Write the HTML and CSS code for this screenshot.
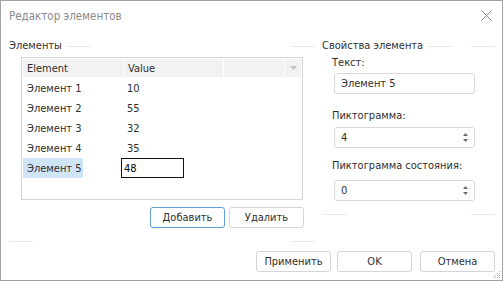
FILE: index.html
```html
<!DOCTYPE html>
<html lang="ru">
<head>
<meta charset="utf-8">
<title>Редактор элементов</title>
<link rel="stylesheet" href="styles.css">
</head>
<body>
<div class="window">
  <div class="titlebar">
    <span class="title">Редактор элементов</span>
    <svg class="close" width="11" height="11" viewBox="0 0 11 11"><path d="M0.5 0.5L10.5 10.5M10.5 0.5L0.5 10.5" stroke="#8a8a8a" stroke-width="1" fill="none"/></svg>
  </div>
  <div class="body">
    <div class="col-left">
      <div class="group-head">
        <span class="group-title">Элементы</span>
        <span class="gline l1"></span>
        <span class="flex"></span>
        <span class="gline l2"></span>
      </div>
      <div class="grid">
        <div class="grid-head">
          <div class="hc c1">Element</div>
          <div class="hc c2">Value</div>
          <div class="hc c3"></div>
          <div class="hc c4"><svg width="7" height="4" viewBox="0 0 7 4"><path d="M0 0H7L3.5 4Z" fill="#c4c4c4"/></svg></div>
        </div>
        <div class="row"><div class="cell c1">Элемент 1</div><div class="cell c2">10</div></div>
        <div class="row"><div class="cell c1">Элемент 2</div><div class="cell c2">55</div></div>
        <div class="row"><div class="cell c1">Элемент 3</div><div class="cell c2">32</div></div>
        <div class="row"><div class="cell c1">Элемент 4</div><div class="cell c2">35</div></div>
        <div class="row"><div class="cell c1 sel">Элемент 5</div><div class="cell c2 edit">48</div></div>
      </div>
      <div class="grid-buttons">
        <button class="btn focus">Добавить</button>
        <button class="btn">Удалить</button>
      </div>
      <div class="group-foot">
        <span class="gline f1"></span>
        <span class="flex"></span>
        <span class="gline l2"></span>
      </div>
    </div>
    <div class="col-right">
      <div class="group-head">
        <span class="group-title">Свойства элемента</span>
        <span class="gline l1"></span>
        <span class="flex"></span>
        <span class="gline l2"></span>
      </div>
      <div class="props">
        <label class="plabel p1">Текст:</label>
        <div class="field f-text">Элемент 5</div>
        <label class="plabel p2">Пиктограмма:</label>
        <div class="field spin f-icon">4<svg class="arrows" width="5" height="9" viewBox="0 0 5 9"><path d="M0 3H5L2.5 0Z M0 6H5L2.5 9Z" fill="#6d6d6d"/></svg></div>
        <label class="plabel p3">Пиктограмма состояния:</label>
        <div class="field spin f-state">0<svg class="arrows" width="5" height="9" viewBox="0 0 5 9"><path d="M0 3H5L2.5 0Z M0 6H5L2.5 9Z" fill="#6d6d6d"/></svg></div>
      </div>
      <div class="group-foot">
        <span class="gline f1"></span>
        <span class="flex"></span>
        <span class="gline l2"></span>
      </div>
    </div>
  </div>
  <div class="footer">
    <button class="btn">Применить</button>
    <button class="btn ok">OK</button>
    <button class="btn cancel">Отмена</button>
    <svg class="grip" width="8" height="8" viewBox="0 0 8 8"><g fill="#b5b5b5"><rect x="6" y="0" width="1" height="1"/><rect x="4" y="2" width="1" height="1"/><rect x="6" y="2" width="1" height="1"/><rect x="2" y="4" width="1" height="1"/><rect x="4" y="4" width="1" height="1"/><rect x="6" y="4" width="1" height="1"/><rect x="0" y="6" width="1" height="1"/><rect x="2" y="6" width="1" height="1"/><rect x="4" y="6" width="1" height="1"/><rect x="6" y="6" width="1" height="1"/></g></svg>
  </div>
</div>
</body>
</html>
```

FILE: styles.css
```css
* { box-sizing: border-box; }
html, body { margin: 0; padding: 0; background: #fff; }
body {
  font-family: "DejaVu Sans Condensed", "DejaVu Sans", sans-serif;
  font-size: 11px;
  color: #2f2f2f;
}
.window {
  width: 503px;
  height: 281px;
  border: 1px solid #a3a3a3;
  display: flex;
  flex-direction: column;
  position: relative;
  background: #fff;
}
.titlebar {
  height: 30px;
  display: flex;
  align-items: center;
  padding: 0 10px 0 8px;
}
.title {
  flex: 1;
  color: #8a8a8a;
  font-size: 11.5px;
}
.close { display: block; margin-top: -1px; }
.body {
  display: flex;
  padding: 9px 7px 0 8px;
  gap: 7px;
}
.col-left { width: 306px; display: flex; flex-direction: column; }
.col-right { flex: 1; display: flex; flex-direction: column; }
.group-head {
  height: 12px;
  display: flex;
  align-items: center;
}
.group-title { line-height: 12px; white-space: nowrap; }
.gline { height: 1px; background: #e9e9e9; width: 24px; display: block; }
.l1 { margin-left: 5px; }
.flex { flex: 1; }
.grid {
  margin: 5px 0 0 12px;
  width: 282px;
  height: 143px;
  border: 1px solid #d5d5d5;
  padding: 1px;
}
.grid-head {
  display: flex;
  height: 18px;
  background: #fff;
  gap: 1px;
}
.grid-head .hc {
  background: #f2f2f2;
  display: flex;
  align-items: center;
  padding-left: 4px;
}
.hc.c1 { width: 100px; }
.hc.c2 { width: 99px; }
.hc.c3 { width: 60px; }
.hc.c4 { flex: 1; justify-content: center; padding-left: 0; }
.row {
  display: flex;
  height: 20px;
}
.grid-head + .row { margin-top: 1px; }
.cell {
  display: flex;
  align-items: center;
  padding-left: 4px;
  white-space: nowrap;
}
.cell.c1 { width: 60px; margin-right: 40px; }
.cell.sel { background: #cfe5f6; }
.cell.edit {
  margin-left: -2px;
  width: 63px;
  height: 20px;
  border: 1px solid #111;
  padding-left: 2px;
  color: #000;
}
.grid-buttons {
  display: flex;
  justify-content: flex-end;
  gap: 4px;
  margin: 7px 11px 0 0;
}
.btn {
  font: inherit;
  color: #2f2f2f;
  width: 75px;
  height: 21px;
  background: #fff;
  border: 1px solid #d4d4d4;
  border-radius: 3px;
  padding: 0;
}
.btn.focus { border-color: #62a0d6; }
.group-foot {
  display: flex;
  align-items: center;
  height: 1px;
  margin-top: 13px;
}
.props {
  display: flex;
  flex-direction: column;
  padding-left: 10px;
  margin-top: 3px;
}
.plabel { height: 16px; line-height: 16px; display: block; white-space: nowrap; }
.field {
  width: 141px;
  height: 21px;
  margin-left: 2px;
  border: 1px solid #d9d9d9;
  border-radius: 3px;
  display: flex;
  align-items: center;
  padding: 0 0 0 6px;
}
.f-text { margin-top: 2px; }
.p2 { margin-top: 14px; }
.f-icon { margin-top: 3px; }
.p3 { margin-top: 10px; }
.f-state { margin-top: 6px; }
.spin { justify-content: space-between; padding-right: 6px; }
.arrows { display: block; }
.footer {
  display: flex;
  justify-content: flex-end;
  padding: 0 7px 0 0;
  margin-top: 9px;
}
.footer .ok { margin-left: 6px; }
.footer .cancel { margin-left: 8px; }
.grip { position: absolute; right: 1px; bottom: 1px; }
```
